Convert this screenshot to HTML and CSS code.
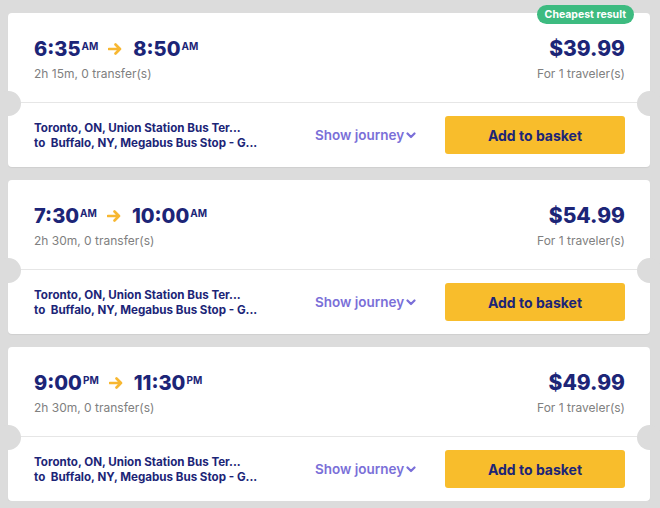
FILE: index.html
```html
<!DOCTYPE html>
<html>
<head>
<meta charset="utf-8">
<link rel="stylesheet" href="styles.css">
</head>
<body>
<div class="list">
  <div class="card">
    <span class="badge">Cheapest result</span>
    <div class="top">
      <div class="left">
        <div class="times"><span class="t">6:35</span><sup>AM</sup><svg class="arrow" viewBox="0 0 14 12" width="14" height="12"><path d="M1 6H12M7.5 1.5L12 6L7.5 10.5" fill="none" stroke="#f7b731" stroke-width="2.6" stroke-linecap="round" stroke-linejoin="round"/></svg><span class="t">8:50</span><sup>AM</sup></div>
        <div class="sub">2h 15m, 0 transfer(s)</div>
      </div>
      <div class="right">
        <div class="price">$39.99</div>
        <div class="sub">For 1 traveler(s)</div>
      </div>
    </div>
    <div class="bottom">
      <div class="route">
        <div>Toronto, ON, Union Station Bus Ter...</div>
        <div>to&nbsp; Buffalo, NY, Megabus Bus Stop - G...</div>
      </div>
      <a class="show">Show journey<svg viewBox="0 0 10 7" width="10" height="7"><path d="M1.5 1.5L5 5L8.5 1.5" fill="none" stroke="#7a6fd8" stroke-width="2.2" stroke-linecap="round" stroke-linejoin="round"/></svg></a>
      <button class="btn">Add to basket</button>
    </div>
  </div>
  <div class="card">
    <div class="top">
      <div class="left">
        <div class="times"><span class="t">7:30</span><sup>AM</sup><svg class="arrow" viewBox="0 0 14 12" width="14" height="12"><path d="M1 6H12M7.5 1.5L12 6L7.5 10.5" fill="none" stroke="#f7b731" stroke-width="2.6" stroke-linecap="round" stroke-linejoin="round"/></svg><span class="t">10:00</span><sup>AM</sup></div>
        <div class="sub">2h 30m, 0 transfer(s)</div>
      </div>
      <div class="right">
        <div class="price">$54.99</div>
        <div class="sub">For 1 traveler(s)</div>
      </div>
    </div>
    <div class="bottom">
      <div class="route">
        <div>Toronto, ON, Union Station Bus Ter...</div>
        <div>to&nbsp; Buffalo, NY, Megabus Bus Stop - G...</div>
      </div>
      <a class="show">Show journey<svg viewBox="0 0 10 7" width="10" height="7"><path d="M1.5 1.5L5 5L8.5 1.5" fill="none" stroke="#7a6fd8" stroke-width="2.2" stroke-linecap="round" stroke-linejoin="round"/></svg></a>
      <button class="btn">Add to basket</button>
    </div>
  </div>
  <div class="card">
    <div class="top">
      <div class="left">
        <div class="times"><span class="t">9:00</span><sup>PM</sup><svg class="arrow" viewBox="0 0 14 12" width="14" height="12"><path d="M1 6H12M7.5 1.5L12 6L7.5 10.5" fill="none" stroke="#f7b731" stroke-width="2.6" stroke-linecap="round" stroke-linejoin="round"/></svg><span class="t">11:30</span><sup>PM</sup></div>
        <div class="sub">2h 30m, 0 transfer(s)</div>
      </div>
      <div class="right">
        <div class="price">$49.99</div>
        <div class="sub">For 1 traveler(s)</div>
      </div>
    </div>
    <div class="bottom">
      <div class="route">
        <div>Toronto, ON, Union Station Bus Ter...</div>
        <div>to&nbsp; Buffalo, NY, Megabus Bus Stop - G...</div>
      </div>
      <a class="show">Show journey<svg viewBox="0 0 10 7" width="10" height="7"><path d="M1.5 1.5L5 5L8.5 1.5" fill="none" stroke="#7a6fd8" stroke-width="2.2" stroke-linecap="round" stroke-linejoin="round"/></svg></a>
      <button class="btn">Add to basket</button>
    </div>
  </div>
</div>
</body>
</html>
```
FILE: styles.css
```css
html, body {
  margin: 0;
  padding: 0;
  background: #dcdcdc;
}
body {
  font-family: Inter, "Liberation Sans", sans-serif;
  color: #1c2577;
}
.list {
  display: flex;
  flex-direction: column;
  gap: 13px;
  padding: 13px 10px 0 8px;
}
.card {
  position: relative;
  background: #fff;
  border-radius: 4px;
  height: 154px;
  display: flex;
  flex-direction: column;
  box-shadow: 0 1px 1px rgba(0,0,0,0.06);
}
.card::before, .card::after {
  content: "";
  position: absolute;
  top: 78px;
  width: 25px;
  height: 25px;
  border-radius: 50%;
  background: #dcdcdc;
}
.card::before { left: -12px; }
.card::after { right: -12px; }
.badge {
  position: absolute;
  top: -8px;
  right: 16px;
  background: #3dbb80;
  color: #fff;
  font-weight: 700;
  font-size: 10.5px;
  line-height: 19px;
  height: 19px;
  padding: 0 8px;
  border-radius: 10px;
}
.top {
  height: 90px;
  box-sizing: border-box;
  border-bottom: 1px solid #e6e6e6;
  display: flex;
  justify-content: space-between;
  padding: 24px 25px 0 26px;
}
.times {
  display: flex;
  align-items: flex-start;
  height: 24px;
}
.t {
  font-size: 20px;
  font-weight: 800;
  line-height: 24px;
}
sup {
  font-size: 10px;
  font-weight: 700;
  line-height: 12px;
  margin-top: 3px;
  margin-left: 1px;
  vertical-align: top;
}
.arrow {
  margin: 6px 11px 0 10px;
}
.sub {
  font-size: 12px;
  color: #808080;
  margin-top: 5px;
  line-height: 16px;
}
.right {
  text-align: right;
}
.price {
  font-size: 21px;
  font-weight: 800;
  line-height: 24px;
}
.bottom {
  flex: 1;
  display: flex;
  align-items: center;
  padding: 0 25px 0 26px;
}
.route {
  font-size: 11.6px;
  font-weight: 700;
  line-height: 15px;
  width: 281px;
  margin-top: 1px;
}
.show {
  color: #7a6fd8;
  font-size: 13.5px;
  font-weight: 600;
  display: flex;
  align-items: center;
  width: 130px;
}
.show svg { margin-left: 2px; }
.btn {
  width: 180px;
  height: 38px;
  border: 0;
  border-radius: 3px;
  background: #f8bd2c;
  color: #1c2577;
  font-family: inherit;
  font-size: 14px;
  font-weight: 700;
  margin-left: auto;
  margin-top: 0;
}
```
